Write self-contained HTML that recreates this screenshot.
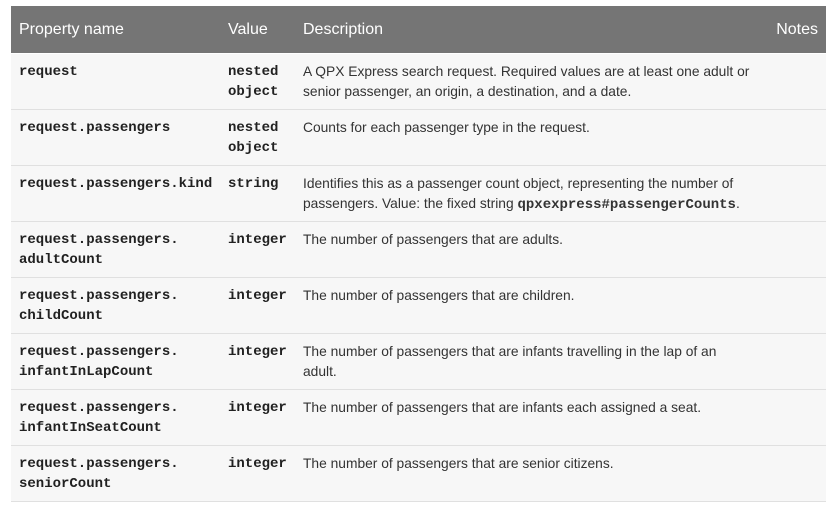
<!DOCTYPE html>
<html><head><style>
body{margin:0;background:#fff;width:838px;height:506px;overflow:hidden;position:relative;font-family:"Liberation Sans",sans-serif;}
.hd{position:absolute;left:11px;top:6px;width:815px;height:47px;background:#757575;color:#fff;font-size:16px;}
.hd span{position:absolute;top:15px;}
.row{position:absolute;left:11px;width:815px;height:55px;background:#f7f7f7;border-bottom:1px solid #e0e0e0;font-size:13.8px;line-height:20px;color:#212121;}
.p,.v{position:absolute;top:8px;font-family:"Liberation Mono",monospace;font-weight:bold;font-size:14px;color:#212121;}
.p{left:8px}.v{left:217px}
.d{position:absolute;left:292px;top:8px;width:500px;color:#333;}
.d b{font-family:"Liberation Mono",monospace;font-size:14px;}
</style></head><body>
<div class="hd"><span style="left:8px">Property name</span><span style="left:217px">Value</span><span style="left:292px">Description</span><span style="right:8px">Notes</span></div>
<div class="row" style="top:54px"><div class="p">request</div><div class="v">nested<br>object</div><div class="d">A QPX Express search request. Required values are at least one adult or<br>senior passenger, an origin, a destination, and a date.</div></div>
<div class="row" style="top:110px"><div class="p">request.passengers</div><div class="v">nested<br>object</div><div class="d">Counts for each passenger type in the request.</div></div>
<div class="row" style="top:166px"><div class="p">request.passengers.kind</div><div class="v">string</div><div class="d">Identifies this as a passenger count object, representing the number of<br>passengers. Value: the fixed string <b>qpxexpress#passengerCounts</b>.</div></div>
<div class="row" style="top:222px"><div class="p">request.passengers.<br>adultCount</div><div class="v">integer</div><div class="d">The number of passengers that are adults.</div></div>
<div class="row" style="top:278px"><div class="p">request.passengers.<br>childCount</div><div class="v">integer</div><div class="d">The number of passengers that are children.</div></div>
<div class="row" style="top:334px"><div class="p">request.passengers.<br>infantInLapCount</div><div class="v">integer</div><div class="d">The number of passengers that are infants travelling in the lap of an<br>adult.</div></div>
<div class="row" style="top:390px"><div class="p">request.passengers.<br>infantInSeatCount</div><div class="v">integer</div><div class="d">The number of passengers that are infants each assigned a seat.</div></div>
<div class="row" style="top:446px"><div class="p">request.passengers.<br>seniorCount</div><div class="v">integer</div><div class="d">The number of passengers that are senior citizens.</div></div>
</body></html>
